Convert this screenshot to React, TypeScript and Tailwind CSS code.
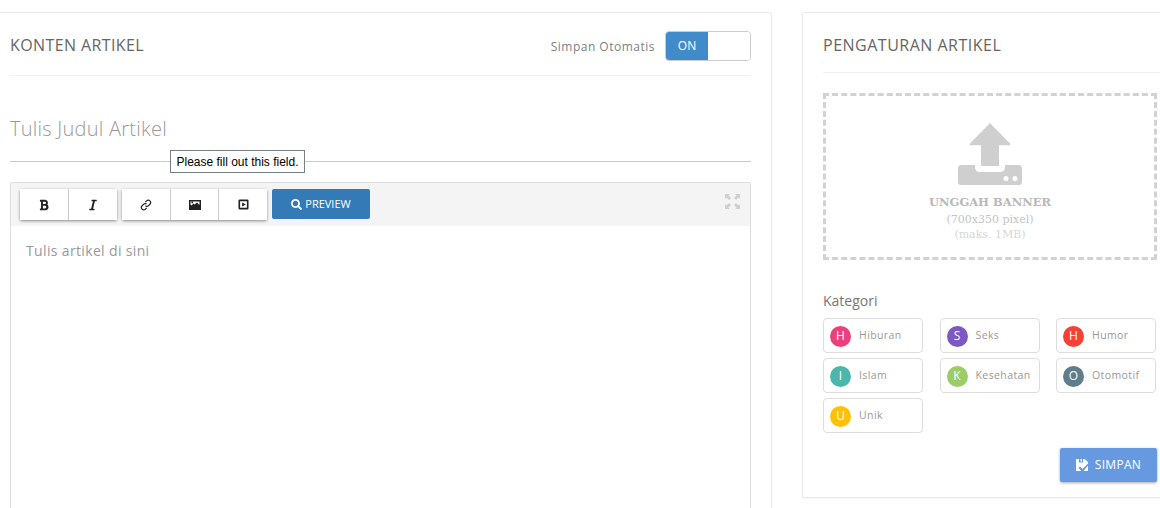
import React from "react";
import { FaBold, FaItalic, FaSearch } from "react-icons/fa";

const chips = [
  ["H", "Hiburan", "bg-[#ec407a]"],
  ["S", "Seks", "bg-[#7e57c2]"],
  ["H", "Humor", "bg-[#f44336]"],
  ["I", "Islam", "bg-[#4db6ac]"],
  ["K", "Kesehatan", "bg-[#9ccc65]"],
  ["O", "Otomotif", "bg-[#607d8b]"],
  ["U", "Unik", "bg-[#ffc107]"],
];

function ToolBtn({ children }: { children: React.ReactNode }) {
  return (
    <button className="flex h-[31px] w-[48px] items-center justify-center border-r border-[#ccc] bg-white text-[#222] first:w-[49px] last:border-r-0">
      {children}
    </button>
  );
}

export default function App() {
  return (
    <div className="h-[508px] w-[1160px] overflow-hidden bg-white font-['Open_Sans',sans-serif]">
      <div className="flex items-start pt-3">
        <section className="h-[600px] w-[772px] shrink-0 rounded-tr-[3px] border-r border-t border-[#e9e9ef] pl-[10px] pr-5 shadow-[0_1px_2px_rgba(0,0,0,0.03)]">
          <header className="flex h-[63px] items-center justify-between border-b border-[#f0f0f0]">
            <h2 className="mt-[2px] text-[16px] tracking-[0.4px] text-[#666]">KONTEN ARTIKEL</h2>
            <div className="mt-[4px] flex items-center gap-[10px]">
              <span className="mt-[1px] text-[12px] tracking-[0.5px] text-[#7b7f84]">Simpan Otomatis</span>
              <div className="flex h-[30px] w-[86px] overflow-hidden rounded-[4px] border border-[#ccc]">
                <span className="flex w-[42px] items-center justify-center bg-[#428bca] text-[12px] text-white">ON</span>
                <span className="flex-1 bg-white" />
              </div>
            </div>
          </header>
          <div className="relative mt-[39px] h-[47px] border-b border-[#c5c8d6]">
            <p className="text-[20px] font-light leading-[28px] tracking-[0.25px] text-[#999]">Tulis Judul Artikel</p>
            <div className="absolute left-[160px] top-[35px] flex h-[23px] w-[135px] items-center justify-center border border-[#767f86] bg-white font-['Liberation_Sans',sans-serif] text-[12px] text-black">
              Please fill out this field.
            </div>
          </div>
          <div className="mt-5 h-[400px] rounded-t-[2px] border border-[#ddd]">
            <div className="relative flex h-[43px] items-start gap-[5px] bg-[#f4f4f4] pl-[9px] pt-[6px]">
              <div className="flex rounded-[2px] shadow-[0_1px_3px_rgba(0,0,0,0.45)]">
                <ToolBtn><FaBold className="h-[12px] w-[12px]" /></ToolBtn>
                <ToolBtn><FaItalic className="h-[12px] w-[12px]" /></ToolBtn>
              </div>
              <div className="flex rounded-[2px] shadow-[0_1px_3px_rgba(0,0,0,0.45)]">
                <ToolBtn>
                  <svg viewBox="0 0 12 12" className="h-[12px] w-[12px]" fill="none" stroke="#222" strokeWidth="1.200">
                    <path d="M5.300 3.200 6.800 1.700a2 2 0 0 1 2.900 0l.4.400a2 2 0 0 1 0 2.900L8.300 6.800a2 2 0 0 1-2.900 0" />
                    <path d="M6.700 8.800 5.200 10.300a2 2 0 0 1-2.900 0l-.4-.4a2 2 0 0 1 0-2.900L3.700 5.200a2 2 0 0 1 2.900 0" />
                  </svg>
                </ToolBtn>
                <ToolBtn>
                  <svg viewBox="0 0 12 10" className="h-[10px] w-[12px]">
                    <path fillRule="evenodd" d="M0 0h12v10H0ZM1.500 1.500v3l1 1 2-2 1 1L8 2.500 10.500 5V1.500ZM2.500 1.800h1.500v1.400H2.500Z" fill="#222" />
                  </svg>
                </ToolBtn>
                <ToolBtn>
                  <svg viewBox="0 0 12 12" className="h-[11px] w-[11px]">
                    <path fillRule="evenodd" d="M2 .5h8A1.500 1.500 0 0 1 11.500 2v8A1.500 1.500 0 0 1 10 11.500H2A1.500 1.500 0 0 1 .5 10V2A1.500 1.500 0 0 1 2 .5Zm.3 2v7h7.400v-7ZM4.500 3.800 8.500 6l-4 2.200Z" fill="#222" />
                  </svg>
                </ToolBtn>
              </div>
              <button className="flex h-[30px] w-[98px] items-center justify-center gap-[3px] rounded-[2px] bg-[#337ab7] text-[11px] text-white">
                <FaSearch className="h-[11px] w-[11px]" />
                PREVIEW
              </button>
              <svg viewBox="0 0 15 15" className="absolute right-[10px] top-[11px] h-[15px] w-[15px]" fill="#cfcfcf">
                <path d="M0 0h5L3.500 1.500 6 4 4 6 1.500 3.500 0 5ZM15 0v5l-1.500-1.500L11 6 9 4l2.500-2.500L10 0ZM0 15v-5l1.500 1.500L4 9l2 2-2.500 2.500L5 15ZM15 15h-5l1.500-1.500L9 11l2-2 2.500 2.500L15 10Z" />
              </svg>
            </div>
            <p className="pl-[15px] pt-[15px] text-[14px] leading-[20px] tracking-[0.35px] text-[#999]">Tulis artikel di sini</p>
          </div>
        </section>

        <section className="ml-[30px] h-[486px] w-[400px] shrink-0 rounded-tl-[3px] border border-[#e9e9ef] pl-5 shadow-[0_1px_2px_rgba(0,0,0,0.04)]">
          <h2 className="flex h-[60px] w-[338px] items-center border-b border-[#f0f0f0] pt-[5px] text-[16px] tracking-[0.5px] text-[#666]">
            PENGATURAN ARTIKEL
          </h2>
          <div className="mt-5 flex h-[167px] w-[334px] flex-col items-center border-[3px] border-dashed border-[#d2d2d2] pt-[27px] font-['DejaVu_Serif',serif]">
            <svg viewBox="0 0 64 62" className="h-[62px] w-[64px]" fill="#cfcfcf">
              <path fillRule="evenodd" d="M32 0 52 20.500a1 1 0 0 1-.7 1.700H41V43H23V22.200H12.700a1 1 0 0 1-.7-1.700ZM3 42h14v2c0 3 2 5 5 5h20c3 0 5-2 5-5v-2h14c2 0 3 1.500 3 3v14c0 2-1 3-3 3H3c-2 0-3-1-3-3V45c0-1.500 1-3 3-3Zm45 11a2.500 2.500 0 1 0 0 5 2.500 2.500 0 0 0 0-5Zm9 0a2.500 2.500 0 1 0 0 5 2.500 2.500 0 0 0 0-5Z" />
            </svg>
            <p className="mt-[7px] text-[11.500px] font-bold leading-[20px] text-[#b8b8b8]">UNGGAH BANNER</p>
            <p className="text-[11px] leading-[15px] text-[#c4c4c4]">(700x350 pixel)</p>
            <p className="text-[11px] leading-[15px] text-[#d6d6d6]">(maks. 1MB)</p>
          </div>
          <p className="mt-[31px] text-[14px] leading-[20px] text-[#777]">Kategori</p>
          <div className="mt-[7px] grid w-[333px] grid-cols-[100px_100px_100px] justify-between gap-y-[5px]">
            {chips.map(([letter, name, color]) => (
              <div key={name} className="flex h-[35px] items-center rounded-[4px] border border-[#ddd] pl-[6px]">
                <span className={`mt-[1px] flex h-[21px] w-[21px] items-center justify-center rounded-full text-[12px] text-white ${color}`}>{letter}</span>
                <span className="ml-[8px] mt-[1px] text-[10.500px] tracking-[0.4px] text-[#999]">{name}</span>
              </div>
            ))}
          </div>
          <div className="mt-[15px] flex w-[334px] justify-end">
            <button className="flex h-[34px] w-[97px] items-center justify-center gap-[7px] rounded-[2px] bg-[#6699e0] text-[12px] tracking-[0.3px] text-white shadow-[0_1px_3px_rgba(0,0,0,0.35)]">
              <svg viewBox="0 0 12 12" className="h-[12px] w-[12px]" fill="white">
                <path fillRule="evenodd" d="M0 0h3v3.500h4V0h1.500L12 3v1.500L6.500 10 4 7.500 2.500 9 5 11.500V12H0ZM4.500 0H6v2.500H4.500ZM12 6.500V12H7.500Z" />
              </svg>
              SIMPAN
            </button>
          </div>
        </section>
      </div>
    </div>
  );
}
